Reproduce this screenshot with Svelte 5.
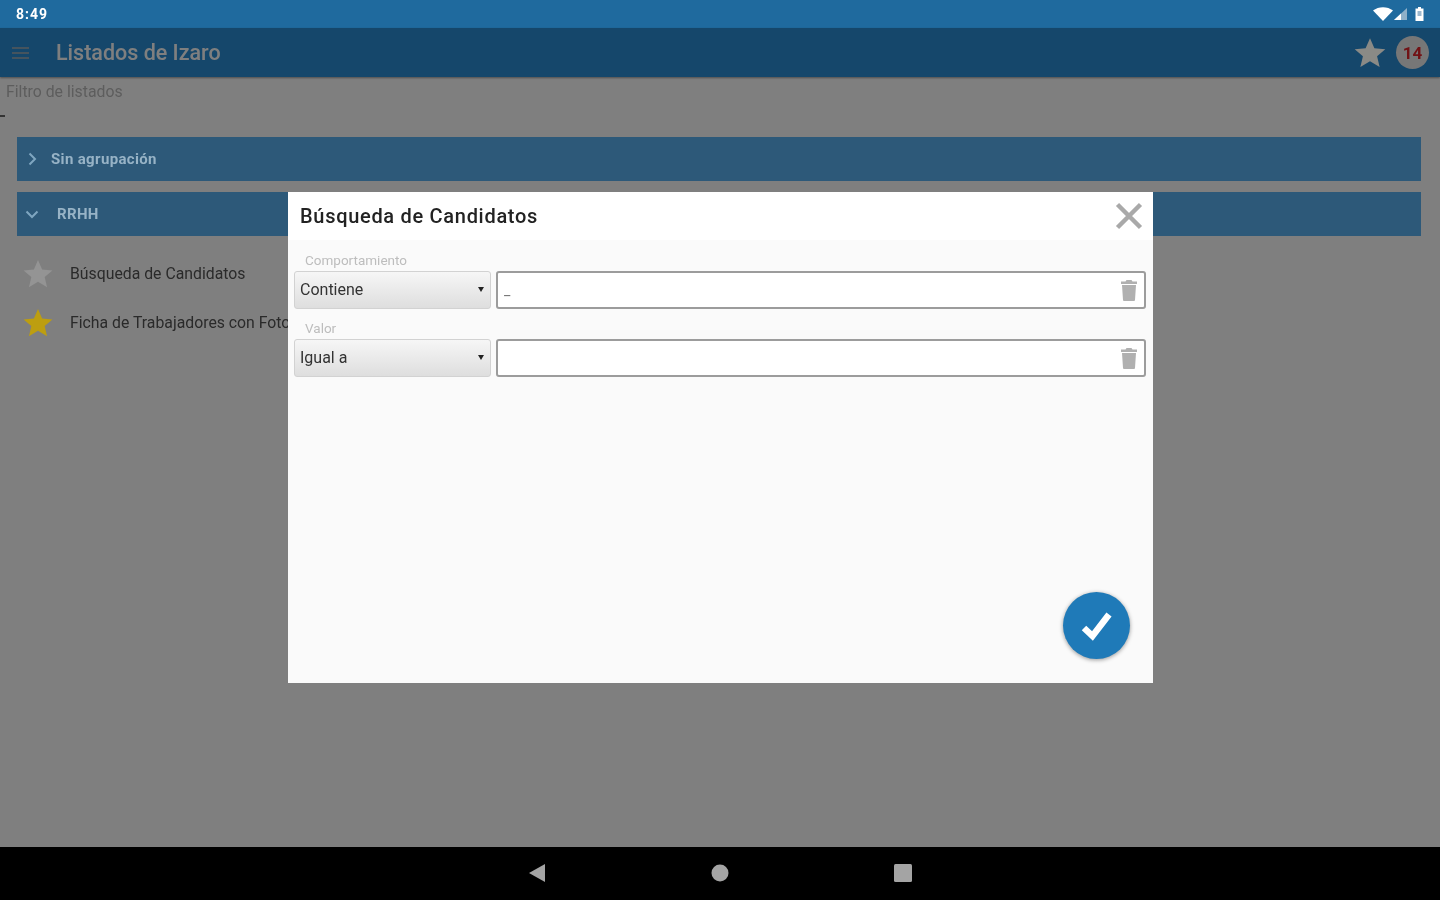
<script>
    const groups = [
        { name: 'Sin agrupación', open: false },
        { name: 'RRHH', open: true },
    ];
    const listados = [
        { name: 'Búsqueda de Candidatos', fav: false },
        { name: 'Ficha de Trabajadores con Foto', fav: true },
    ];
    const filtros = [
        { label: 'Comportamiento', option: 'Contiene', value: '_' },
        { label: 'Valor', option: 'Igual a', value: '' },
    ];
    const star = 'M12 1.5l3.1 7.2 7.7.6-5.8 5 1.8 7.6-6.8-4-6.800 4 1.800-7.600-5.800-5 7.700-.6z';
</script>

<div class="device">
    <header class="status">
        <span class="time">8:49</span>
        <div class="status-icons">
            <svg width="20" height="14" viewBox="0 0 20 14"><path d="M0 3.500C5.500 -1 14.500 -1 20 3.500L10 14z" fill="#fff" /></svg>
            <svg width="14" height="14" viewBox="0 0 14 14"><path d="M14 1v12H1z" fill="#8fb0c8" /><path d="M8 6.500V13H1z" fill="#fff" /></svg>
            <svg class="battery" width="9" height="14" viewBox="0 0 9 14"><path d="M3 0h3v1.500h2.500V14H.5V1.500H3z" fill="#fff" /><rect x="2.500" y="4" width="4" height="5" fill="#9db9cf" /></svg>
        </div>
    </header>

    <div class="screen">
        <div class="appbar">
            <div class="burger"><i></i><i></i><i></i></div>
            <h1>Listados de Izaro</h1>
            <svg class="appbar-star lift" width="34" height="34" viewBox="0 0 24 24"><path d={star} fill="#8a8a86" /></svg>
            <span class="badge">14</span>
        </div>

        <main>
            <div class="filter">Filtro de listados<span class="tick"></span></div>
            {#each groups as g}
                <div class="group">
                    <svg class="lift" class:open={g.open} width="14" height="14" viewBox="0 0 14 14">
                        <path d="M4.500 1.500l5.500 5.500-5.500 5.500" fill="none" stroke="#7fa6c0" stroke-width="2" />
                    </svg>
                    <span class="lift" class:indent={g.open}>{g.name}</span>
                </div>
            {/each}
            <ul>
                {#each listados as l}
                    <li>
                        <svg class="lift" width="32" height="32" viewBox="0 0 24 24"><path d={star} fill={l.fav ? '#bd9e10' : '#949494'} /></svg>
                        <span>{l.name}</span>
                    </li>
                {/each}
            </ul>
        </main>

        <div class="scrim"></div>

        <section class="modal">
            <div class="modal-head">
                <h2>Búsqueda de Candidatos</h2>
                <svg width="30" height="30" viewBox="0 0 30 30"><path d="M3.500 3.500l23 23M26.500 3.500l-23 23" stroke="#a9a9a9" stroke-width="4.500" /></svg>
            </div>
            <div class="modal-body">
                {#each filtros as f}
                    <label>{f.label}</label>
                    <div class="row">
                        <div class="select">
                            <span>{f.option}</span>
                            <i class="caret"></i>
                        </div>
                        <div class="input">
                            <span>{f.value}</span>
                            <svg width="16" height="21" viewBox="0 0 16 21">
                                <path d="M5.500 0h5l1 1.500H16V4H0V1.500h4.500zM1 5h14l-1 15a1 1 0 0 1-1 1H3a1 1 0 0 1-1-1z" fill="#b0b0b0" />
                            </svg>
                        </div>
                    </div>
                {/each}
                <button class="fab" aria-label="Aceptar">
                    <svg width="36" height="36" viewBox="0 0 36 36"><path d="M5 20l8.500 8L30 6.500" fill="none" stroke="#fff" stroke-width="6.500" /></svg>
                </button>
            </div>
        </section>
    </div>

    <footer class="nav">
        <svg width="18" height="20" viewBox="0 0 18 20"><path d="M17 1v18L1 10z" fill="#a4a4a4" /></svg>
        <svg width="18" height="18" viewBox="0 0 18 18"><circle cx="9" cy="9" r="8.500" fill="#a4a4a4" /></svg>
        <svg width="18" height="18" viewBox="0 0 18 18"><rect width="18" height="18" rx="1.500" fill="#a4a4a4" /></svg>
    </footer>
</div>

<style>
    :global(body) {
        font-family: Roboto, "Liberation Sans", sans-serif;
    }

    .device {
        width: 1440px;
        height: 900px;
        display: flex;
        flex-direction: column;
        overflow: hidden;
        /* the reference is an upscaled capture, everything is a bit soft */
        filter: blur(.7px);
    }

    .lift {
        position: relative;
        z-index: 1;
    }

    .status {
        height: 28px;
        flex: none;
        background: #1f6a9e;
        display: flex;
        align-items: center;
        justify-content: space-between;
        padding: 0 16px;
        color: #fff;
    }

    .time {
        font-size: 14px;
        font-weight: 700;
        letter-spacing: 1px;
    }

    .status-icons {
        display: flex;
        align-items: center;
    }

    .battery {
        margin-left: 8px;
    }

    .screen {
        flex: 1;
        position: relative;
        background: #fff;
        display: flex;
        flex-direction: column;
    }

    .appbar {
        height: 49px;
        flex: none;
        background: #2a8fd6;
        display: flex;
        align-items: center;
        padding: 0 11px 0 12px;
        box-shadow: 0 1px 2px rgba(0, 0, 0, .4);
    }

    .burger {
        width: 17px;
        display: flex;
        flex-direction: column;
        gap: 3px;
        margin-right: 27px;
    }

    .burger i {
        height: 2px;
        background: #8ba9bd;
    }

    h1 {
        flex: 1;
        margin: 0;
        font-size: 21.500px;
        font-weight: 500;
        color: #fff;
    }

    .appbar-star {
        margin-right: 9px;
    }

    .badge {
        width: 33px;
        height: 33px;
        border-radius: 50%;
        background: #eee;
        color: #e3242b;
        font-size: 17px;
        font-weight: 700;
        display: flex;
        align-items: center;
        justify-content: center;
    }

    main {
        flex: 1;
    }

    .filter {
        height: 60px;
        padding: 5px 6px 0;
        box-sizing: border-box;
        font-size: 15.800px;
        color: #bbb;
        position: relative;
    }

    .tick {
        position: absolute;
        left: 0;
        top: 38px;
        width: 5px;
        height: 2px;
        background: #666;
    }

    .group {
        height: 44px;
        margin: 0 19px 11px 17px;
        background: #5ab2f2;
        display: flex;
        align-items: center;
        padding-left: 8px;
        font-size: 15px;
        font-weight: 700;
        letter-spacing: .35px;
        color: #97b3c6;
        gap: 12px;
    }

    .group svg.open {
        transform: rotate(90deg);
    }

    .group .indent {
        margin-left: 6px;
    }

    ul {
        list-style: none;
        margin: 13px 0 0;
        padding: 0 0 0 22px;
    }

    li {
        display: flex;
        align-items: center;
        height: 49px;
        gap: 16px;
        font-size: 15.800px;
        color: #555;
        white-space: nowrap;
    }

    .scrim {
        position: absolute;
        inset: 0;
        background: rgba(0, 0, 0, .5);
    }

    .modal {
        position: absolute;
        z-index: 2;
        left: 288px;
        top: 164px;
        width: 865px;
        height: 491px;
        background: #fafafa;
        display: flex;
        flex-direction: column;
    }

    .modal-head {
        height: 48px;
        flex: none;
        background: #fff;
        display: flex;
        align-items: center;
        justify-content: space-between;
        padding: 0 9px 0 12px;
    }

    h2 {
        margin: 0;
        font-size: 20px;
        font-weight: 500;
        letter-spacing: .7px;
        color: #222;
    }

    .modal-body {
        flex: 1;
        position: relative;
        padding: 13px 7px 0 6px;
    }

    label {
        display: block;
        height: 18px;
        padding-left: 11px;
        font-size: 13.500px;
        color: #bdbdbd;
        line-height: 15px;
    }

    .row {
        display: flex;
        gap: 5px;
        height: 38px;
        margin-bottom: 12px;
    }

    .select {
        width: 197px;
        box-sizing: border-box;
        background: linear-gradient(#f6f6f6, #dedede);
        border: 1px solid #d2d2d2;
        border-radius: 3px;
        display: flex;
        align-items: center;
        justify-content: space-between;
        padding: 0 6px 2px 5px;
        font-size: 16px;
        color: #333;
    }

    .caret {
        width: 0;
        height: 0;
        border: 3px solid transparent;
        border-top: 5px solid #222;
        border-bottom: 0;
    }

    .input {
        flex: 1;
        box-sizing: border-box;
        background: #fff;
        border: 2px solid #9c9c9c;
        border-radius: 3px;
        display: flex;
        align-items: center;
        justify-content: space-between;
        padding: 0 7px 0 6px;
        font-size: 14px;
        color: #777;
    }

    .input svg {
        margin-top: 1px;
    }

    .fab {
        position: absolute;
        right: 23px;
        bottom: 24px;
        width: 67px;
        height: 67px;
        border: 0;
        padding: 0;
        border-radius: 50%;
        background: #1f7ab8;
        box-shadow: 0 1px 4px rgba(0, 0, 0, .4);
        display: flex;
        align-items: center;
        justify-content: center;
    }

    .nav {
        height: 53px;
        flex: none;
        background: #000;
        display: flex;
        align-items: center;
        justify-content: center;
        gap: 165px;
        padding-bottom: 1px;
        box-sizing: border-box;
    }
</style>
